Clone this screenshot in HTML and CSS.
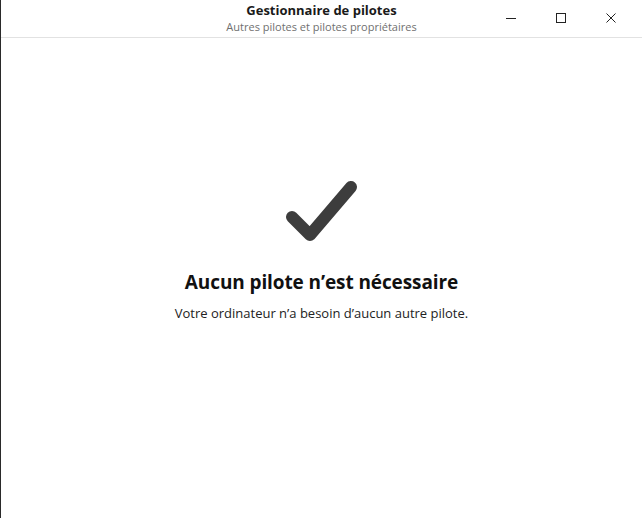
FILE: index.html
```html
<!DOCTYPE html>
<html lang="fr">
<head>
  <meta charset="UTF-8">
  <title>Gestionnaire de pilotes</title>
  <link rel="stylesheet" href="styles.css">
</head>
<body>
  <div class="window">
    <header class="titlebar">
      <div class="titles">
        <div class="title">Gestionnaire de pilotes</div>
        <div class="subtitle">Autres pilotes et pilotes propriétaires</div>
      </div>
      <div class="controls">
        <span class="ctl">
          <svg width="12" height="12" viewBox="0 0 12 12"><path d="M1 6.5h10" stroke="#222" stroke-width="1"/></svg>
        </span>
        <span class="ctl">
          <svg width="12" height="12" viewBox="0 0 12 12"><rect x="1.5" y="1.5" width="9" height="9" fill="none" stroke="#222" stroke-width="1"/></svg>
        </span>
        <span class="ctl">
          <svg width="12" height="12" viewBox="0 0 12 12"><path d="M1.5 1.5l9 9M10.5 1.5l-9 9" stroke="#222" stroke-width="1"/></svg>
        </span>
      </div>
    </header>
    <main class="content">
      <svg class="check" width="80" height="66" viewBox="0 0 80 66">
        <path d="M10 37 L28 55 L69 7" fill="none" stroke="#3d3d3d" stroke-width="12" stroke-linecap="round" stroke-linejoin="round"/>
      </svg>
      <h1>Aucun pilote n’est nécessaire</h1>
      <p>Votre ordinateur n’a besoin d’aucun autre pilote.</p>
    </main>
  </div>
</body>
</html>
```
FILE: styles.css
```css
body { margin: 0; font-family: "Open Sans", "Noto Sans", sans-serif; background: #fff; color: #111; }
.window { height: 518px; border-left: 1px solid #2a2a2a; display: flex; flex-direction: column; box-sizing: border-box; }
.titlebar { height: 37px; border-bottom: 1px solid #e2e2e2; position: relative; display: flex; justify-content: center; }
.titles { text-align: center; padding-top: 1px; }
.title { font-size: 13px; font-weight: 700; line-height: 18px; color: #1a1a1a; }
.subtitle { font-size: 11px; line-height: 15px; color: #707070; }
.controls { position: absolute; right: 6px; top: 0; height: 36px; display: flex; align-items: center; }
.ctl { width: 50px; display: flex; justify-content: center; }
.content { flex: 1; display: flex; flex-direction: column; align-items: center; padding-top: 142px; }
.check { display: block; }
h1 { margin: 23px 0 0; font-size: 19px; font-weight: 700; line-height: 26px; color: #111; letter-spacing: -0.1px; }
p { margin: 9px 0 0; font-size: 13px; line-height: 18px; color: #222; }
```
